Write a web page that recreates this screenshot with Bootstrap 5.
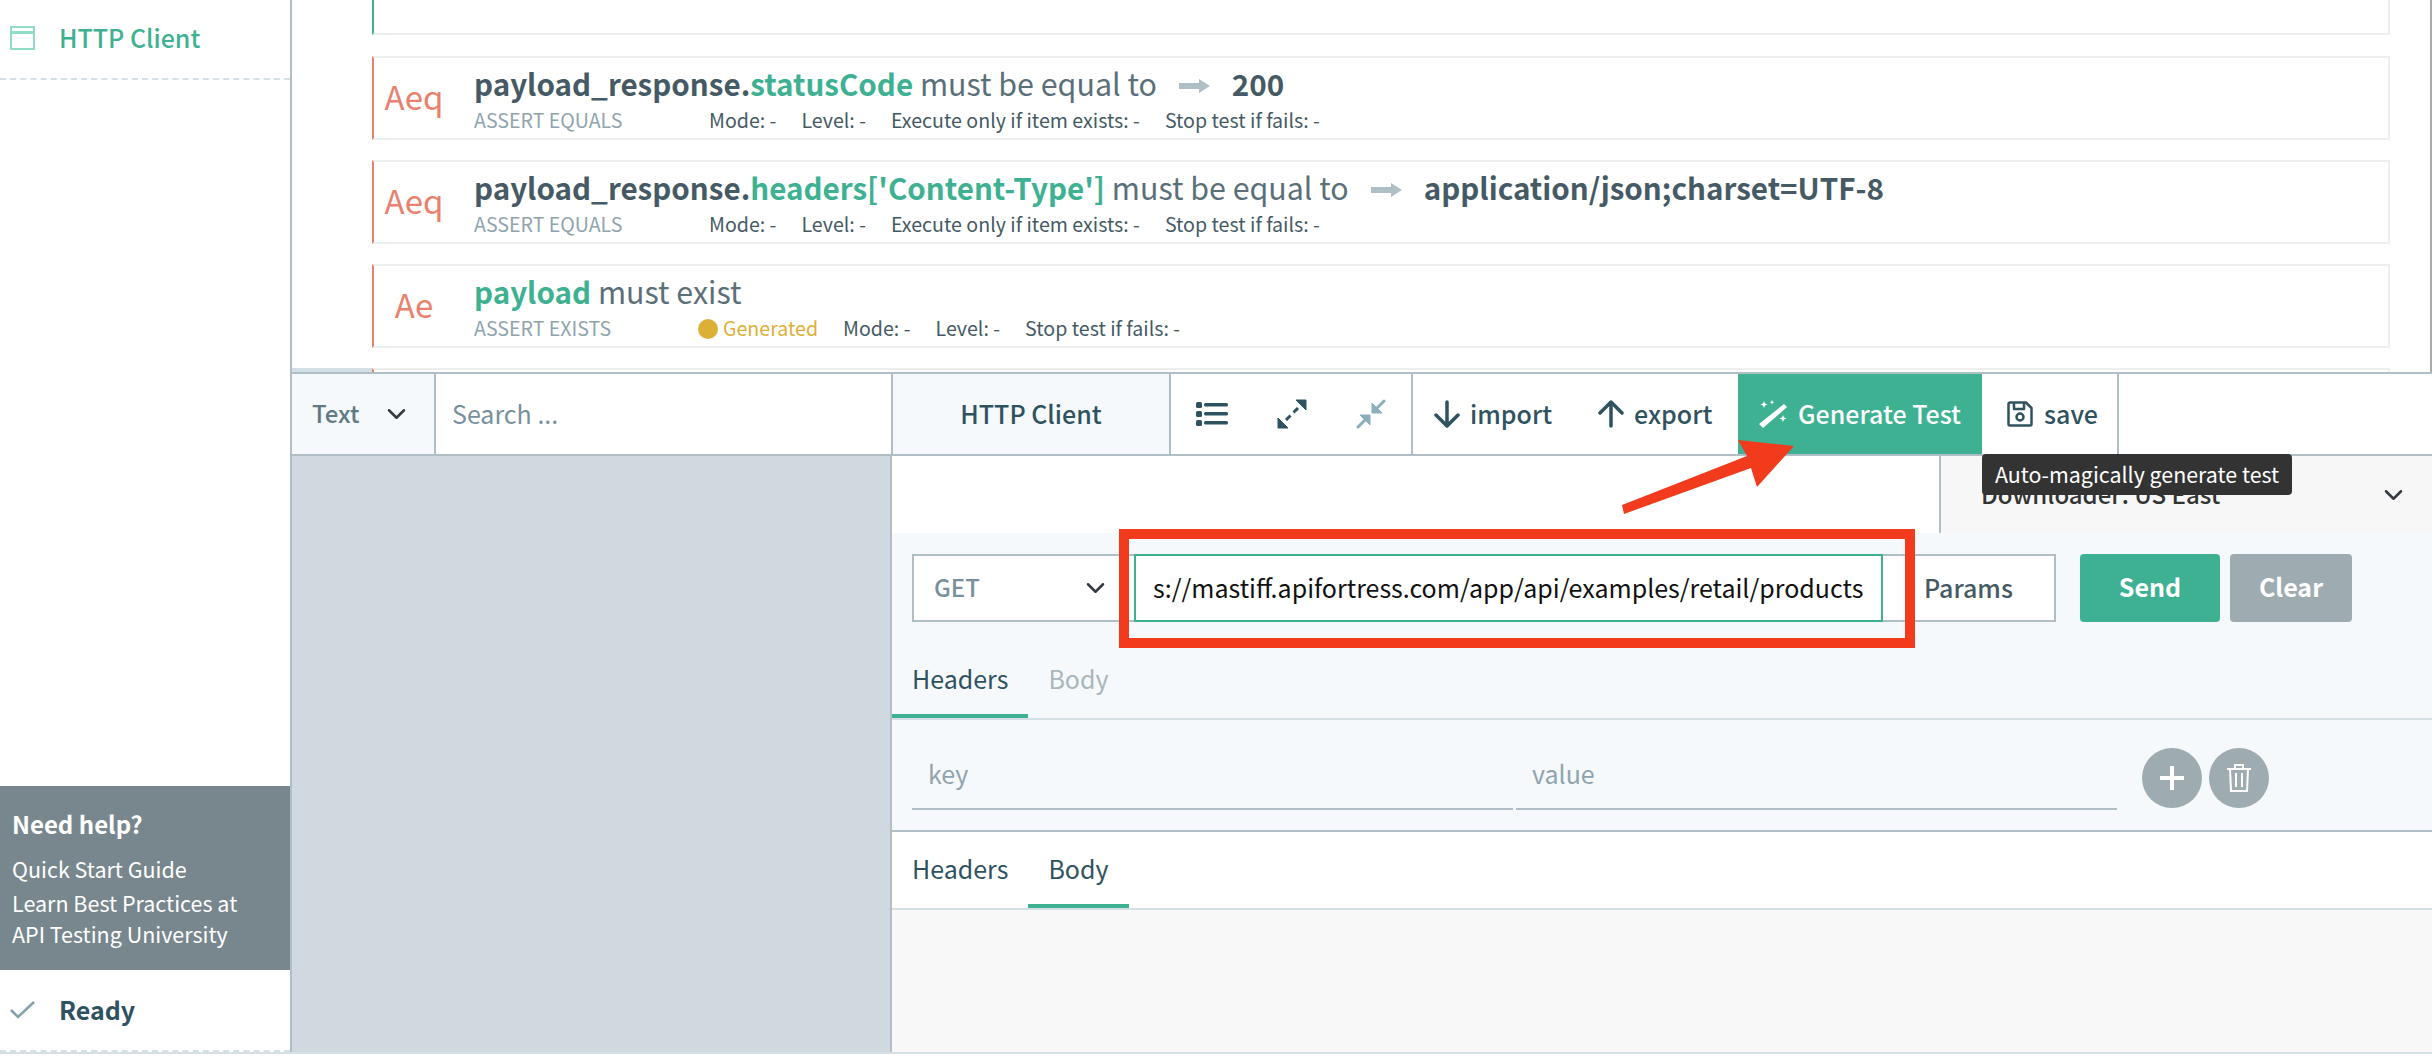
<!DOCTYPE html>
<html>
<head>
    <title>HTTP Client</title>
    <link href="https://cdn.jsdelivr.net/npm/bootstrap@5.3.0/dist/css/bootstrap.min.css" rel="stylesheet">
    <style>
        body { font-family: "Noto Sans CJK SC", "Liberation Sans", sans-serif; background: #fff; height: 1060px; overflow: hidden; color: #455a64; }
        .app { height: 1054px; border-bottom: 2px solid #d5dfe6; position: relative; }

        /* sidebar */
        .side { width: 292px; border-right: 2px solid #b0bec5; flex: none; }
        .side-item { height: 80px; padding: 0 0 2px 10px; border-bottom: 2px dashed #d5dfe6; color: #3eb193; font-size: 25px; font-weight: 500; }
        .side-item svg { margin-right: 24px; }
        .help { background: #78878e; color: #fff; padding: 20px 12px 16px; height: 184px; font-size: 21.5px; line-height: 31px; }
        .help-title { font-weight: 700; font-size: 24px; margin-bottom: 11px; line-height: 36px; }
        .help-row { margin-bottom: 3px; }
        .ready { height: 82px; padding-left: 10px; font-size: 25px; font-weight: 700; color: #2f5260; border-bottom: 2px dashed #d5dfe6; }
        .ready svg { margin-right: 24px; }

        /* assertion list */
        .assert-pane { height: 372px; overflow: hidden; border-right: 2px solid #aaa; padding-left: 80px; padding-right: 40px; }
        .assert { height: 84px; border: 2px solid #eee; border-left-color: #e8816d; margin-bottom: 20px; }
        .assert-cut { height: 35px; border-top: 0; border-left-color: #3eb193; margin-bottom: 21px; }
        .assert-peek { display: flex; margin-left: -80px; margin-right: 0; }
        .peek-fill { width: 80px; height: 4px; background: #d5dfe6; }
        .peek-box { flex: 1; height: 4px; border-top: 2px solid #eee; border-left: 2px solid #e8816d; border-right: 2px solid #eee; }
        .kind { width: 80px; margin-right: 20px; padding-bottom: 3px; text-align: center; color: #e8816d; font-size: 33px; flex: none; }
        .title-line { height: 38px; line-height: 38px; margin-top: 6px; font-size: 30.4px; color: #5b6f79; white-space: nowrap; }
        .title-line b { color: #455a64; font-weight: 700; font-size: 29.6px; }
        .title-line i { color: #3eb193; font-style: normal; font-weight: 700; font-size: 29.6px; }
        .goes-to { margin: 0 22px; vertical-align: 3px; }
        .meta-line { height: 24px; line-height: 24px; margin-top: 6px; font-size: 19.6px; color: #455a64; white-space: nowrap; }
        .meta-kind { color: #90a4ae; display: inline-block; width: 235px; }
        .meta-kind.short { width: 224px; }
        .meta-line span + span { margin-right: 25px; }
        .gen { color: #dcaf36; }
        .gen-dot { display: inline-block; width: 20px; height: 20px; border-radius: 50%; background: #dcaf36; vertical-align: -3px; margin-right: 5px; }

        /* toolbar */
        .bar { height: 84px; border-top: 2px solid #b0bec5; border-bottom: 2px solid #b0bec5; }
        .bar > div, .bar > select, .bar > input { height: 100%; }
        .sel-kind { width: 144px; flex: none; border: 0; border-right: 2px solid #b0bec5; border-radius: 0; background-color: #f5f9fc; color: #5f7a85; font-weight: 500; font-size: 24px; padding: 0 0 3px 20px; background-position: right 24px center; background-size: 27px 20px; }
        .search { width: 455px; flex: none; border: 0; border-radius: 0; font-size: 25px; padding: 0 0 2px 16px; color: #78909c; }
        .search::placeholder { color: #78909c; }
        .bar-title { width: 280px; flex: none; background: #f5f9fc; border-left: 2px solid #b0bec5; border-right: 2px solid #b0bec5; color: #2f5260; font-size: 25px; font-weight: 500; }
        .bar-icons { width: 242px; flex: none; border-right: 2px solid #b0bec5; padding-left: 25px; gap: 49px; }
        .bar-icons svg { flex: none; }
        .bar-move { width: 325px; flex: none; padding-left: 21px; color: #2f5260; font-size: 25px; font-weight: 500; }
        .bar-move svg { margin-right: 10px; flex: none; }
        .bar-move span { margin-right: 46px; }
        .bar-move span:last-child { margin-right: 0; }
        .bar-gen { width: 244px; flex: none; background: #3eb193; color: #fff; font-size: 25px; font-weight: 500; padding-left: 20px; }
        .bar-gen svg { margin-right: 10px; flex: none; }
        .bar-save { width: 137px; flex: none; border-right: 2px solid #b0bec5; color: #2f5260; font-size: 25px; font-weight: 500; padding-left: 25px; }
        .bar-save svg { margin-right: 11px; flex: none; }

        /* lower panes */
        .lower { height: 596px; }
        .tree-pane { width: 600px; flex: none; background: #d1d9e0; border-right: 2px solid #b0bec5; }
        .client { flex: 1; min-width: 0; }
        .top-strip { height: 77px; }
        .strip-blank { width: 1047px; flex: none; }
        .downloader { flex: 1; border: 0; border-left: 2px solid #b0bec5; border-radius: 0; background-color: #f7f7f7; font-size: 24px; font-weight: 500; color: #333; padding: 0 0 2px 40px; height: 77px; background-position: right 25px center; background-size: 27px 20px; }
        .req { background: #f5f9fc; height: 299px; border-bottom: 2px solid #b0bec5; }
        .req-row { height: 115px; padding: 21px 0 0 20px; }
        .method { width: 222px; height: 68px; flex: none; border: 2px solid #b0bec5; border-right: 0; border-radius: 0; color: #78909c; font-weight: 500; font-size: 24px; padding: 0 0 2px 20px; background-position: right 25px center; background-size: 27px 20px; }
        .url { width: 749px; height: 68px; flex: none; border: 2px solid #3eb193; border-radius: 0; color: #111; font-size: 25px; padding: 0 0 2px 17px; }
        .params { width: 173px; height: 68px; flex: none; background: #fff; border: 2px solid #b0bec5; border-left: 0; color: #455a64; font-weight: 500; font-size: 25px; padding-left: 41px; }
        .go { height: 68px; width: 140px; flex: none; margin-left: 24px; padding-bottom: 8px; background: #3eb193; border: 0; border-radius: 4px; color: #fff; font-weight: 700; font-size: 25px; }
        .wipe { height: 68px; width: 122px; flex: none; margin-left: 10px; padding-bottom: 8px; background: #9eacb2; border: 0; border-radius: 4px; color: #fff; font-weight: 700; font-size: 25px; opacity: 1; }
        .tab-row { display: flex; border-bottom: 2px solid #d5dfe6; background: transparent; }
        .tab-row a { display: block; height: 70px; line-height: 60px; padding: 0 20px; font-size: 25px; color: #2f5260; text-decoration: none; border-bottom: 4px solid transparent; }
        .tab-row a.on { border-bottom-color: #3eb193; }
        .tab-row a.off { color: #a9b7bd; }
        .kv { height: 110px; padding: 28px 0 0 20px; }
        .kv input { width: 601px; height: 62px; flex: none; margin-right: 3px; border: 0; border-bottom: 2px solid #b0bec5; border-radius: 0; background: transparent; font-size: 25px; padding: 0 0 10px 16px; }
        .kv input::placeholder { color: #90a4ae; }
        .round { width: 60px; height: 60px; flex: none; border-radius: 50%; background: #9eacb2; border: 0; padding: 0; margin-left: 22px; }
        .round + .round { margin-left: 7px; }
        .resp-tabs { background: #fff; }
        .resp-tabs a { height: 76px; line-height: 72px; }
        .resp-body { background: #f8f8f8; height: 142px; }

        /* overlays */
        .tip-box { position: absolute; left: 1982px; top: 454px; width: 310px; height: 41px; background: #333; color: #fff; border-radius: 4px; font-size: 21.4px; line-height: 40px; text-align: center; white-space: nowrap; }
        .mark-box { position: absolute; left: 1119px; top: 529px; width: 796px; height: 119px; border: 10px solid #f23b1d; pointer-events: none; }
        .mark-arrow { position: absolute; left: 1600px; top: 420px; }
    </style>
</head>
<body>
    <div class="app d-flex">
        <div class="side d-flex flex-column">
            <div class="side-item d-flex align-items-center">
                <svg width="25" height="24" viewBox="0 0 25 24" fill="none" stroke="#8fdcc8" stroke-width="2"><rect x="1" y="1" width="23" height="22"/><path d="M1 6.5h23" stroke-width="3"/></svg>
                HTTP Client
            </div>
            <div class="flex-grow-1"></div>
            <div class="help">
                <div class="help-title">Need help?</div>
                <div class="help-row">Quick Start Guide</div>
                <div>Learn Best Practices at</div>
                <div>API Testing University</div>
            </div>
            <div class="ready d-flex align-items-center">
                <svg width="25" height="18" viewBox="0 0 25 18" fill="none" stroke="#84a0ab" stroke-width="2.5"><path d="M1 9l7 7L24 1"/></svg>
                Ready
            </div>
        </div>

        <div class="flex-grow-1" style="min-width:0">
            <div class="assert-pane">
                <div class="assert assert-cut"></div>
                <div class="assert d-flex align-items-center">
                    <div class="kind">Aeq</div>
                    <div class="flex-grow-1 align-self-start">
                        <div class="title-line"><b>payload_response.</b><i>statusCode</i> must be equal to<svg class="goes-to" width="31" height="14" viewBox="0 0 31 14" fill="#b0bec5"><path d="M0 4h20V0l11 7-11 7v-4H0z"/></svg><b>200</b></div>
                        <div class="meta-line"><span class="meta-kind">ASSERT EQUALS</span><span>Mode: -</span><span>Level: -</span><span>Execute only if item exists: -</span><span>Stop test if fails: -</span></div>
                    </div>
                </div>
                <div class="assert d-flex align-items-center">
                    <div class="kind">Aeq</div>
                    <div class="flex-grow-1 align-self-start">
                        <div class="title-line"><b>payload_response.</b><i>headers['Content-Type']</i> must be equal to<svg class="goes-to" width="31" height="14" viewBox="0 0 31 14" fill="#b0bec5"><path d="M0 4h20V0l11 7-11 7v-4H0z"/></svg><b>application/json;charset=UTF-8</b></div>
                        <div class="meta-line"><span class="meta-kind">ASSERT EQUALS</span><span>Mode: -</span><span>Level: -</span><span>Execute only if item exists: -</span><span>Stop test if fails: -</span></div>
                    </div>
                </div>
                <div class="assert d-flex align-items-center">
                    <div class="kind">Ae</div>
                    <div class="flex-grow-1 align-self-start">
                        <div class="title-line"><i>payload</i> must exist</div>
                        <div class="meta-line"><span class="meta-kind short">ASSERT EXISTS</span><span class="gen"><span class="gen-dot"></span>Generated</span><span>Mode: -</span><span>Level: -</span><span>Stop test if fails: -</span></div>
                    </div>
                </div>
                <div class="assert-peek"><div class="peek-fill"></div><div class="peek-box"></div></div>
            </div>

            <div class="bar d-flex">
                <select class="form-select sel-kind"><option>Text</option></select>
                <input class="form-control search" type="text" placeholder="Search ...">
                <div class="bar-title d-flex align-items-center justify-content-center">HTTP Client</div>
                <div class="bar-icons d-flex align-items-center">
                    <svg width="32" height="26" viewBox="0 0 32 26" fill="#2f5260"><rect x="0" y="1" width="6" height="6" rx="1.500"/><rect x="0" y="10" width="6" height="6" rx="1.500"/><rect x="0" y="19" width="6" height="6" rx="1.500"/><rect x="8" y="2" width="24" height="3.500" rx="1.500"/><rect x="8" y="11" width="24" height="3.500" rx="1.500"/><rect x="8" y="20" width="24" height="3.500" rx="1.500"/></svg>
                    <svg width="30" height="30" viewBox="0 0 30 30" fill="#2f5260" stroke="#2f5260" stroke-width="3"><path d="M19 1h10v10z" stroke-width="1" stroke-linejoin="round"/><path d="M1 19v10h10z" stroke-width="1" stroke-linejoin="round"/><path d="M21 9l-4.500 4.500M13.500 16.500L9 21"/></svg>
                    <svg width="30" height="30" viewBox="0 0 30 30" fill="#8aaebb" stroke="#8aaebb" stroke-width="3"><path d="M16 14V4l10 10z" stroke-width="1" stroke-linejoin="round"/><path d="M14 16v10L4 16z" stroke-width="1" stroke-linejoin="round"/><path d="M21 9l7-7M9 21l-7 7" stroke-linecap="round"/></svg>
                </div>
                <div class="bar-move d-flex align-items-center">
                    <svg width="26" height="28" viewBox="0 0 26 28" fill="none" stroke="#2f5260" stroke-width="3.500" stroke-linecap="round" stroke-linejoin="round"><path d="M13 2v23M2 15l11 11 11-11"/></svg>
                    <span>import</span>
                    <svg width="26" height="28" viewBox="0 0 26 28" fill="none" stroke="#2f5260" stroke-width="3.500" stroke-linecap="round" stroke-linejoin="round"><path d="M13 26V3M2 13L13 2l11 11"/></svg>
                    <span>export</span>
                </div>
                <div class="bar-gen d-flex align-items-center">
                    <svg width="30" height="30" viewBox="0 0 30 30" fill="#fff"><path d="M26 5l3 3L5 29l-4-4zM6 2l1 2.500L9.500 5.500 7 6.500 6 9 5 6.500 2.500 5.500 5 4.500zM14 1l.7 1.500 1.500.7-1.500.7L14 5.500l-.7-1.600-1.500-.7 1.500-.7zM25 16l1 2.500 2.500 1-2.500 1-1 2.500-1-2.500-2.500-1 2.500-1z"/></svg>
                    Generate Test
                </div>
                <div class="bar-save d-flex align-items-center">
                    <svg width="26" height="26" viewBox="0 0 26 26" fill="none" stroke="#2f5260" stroke-width="2.500" stroke-linejoin="round"><path d="M3 1.500h16L24.500 7v16a1.500 1.500 0 0 1-1.500 1.500H3A1.500 1.500 0 0 1 1.500 23V3A1.500 1.500 0 0 1 3 1.500z"/><path d="M7 2v6h10V2"/><circle cx="13" cy="16" r="3.500"/></svg>
                    save
                </div>
            </div>

            <div class="lower d-flex">
                <div class="tree-pane"></div>
                <div class="client">
                    <div class="top-strip d-flex">
                        <div class="strip-blank"></div>
                        <select class="form-select downloader"><option>Downloader: US East</option></select>
                    </div>
                    <div class="req">
                        <div class="req-row d-flex">
                            <select class="form-select method"><option>GET</option></select>
                            <input class="form-control url" type="text" value="s://mastiff.apifortress.com/app/api/examples/retail/products">
                            <div class="params d-flex align-items-center">Params</div>
                            <button class="btn go" type="button">Send</button>
                            <button class="btn wipe" type="button">Clear</button>
                        </div>
                        <div class="tab-row">
                            <a class="on" href="#">Headers</a>
                            <a class="off" href="#">Body</a>
                        </div>
                        <div class="kv d-flex">
                            <input class="form-control" type="text" placeholder="key">
                            <input class="form-control" type="text" placeholder="value">
                            <button class="round d-flex align-items-center justify-content-center" type="button"><svg width="26" height="26" viewBox="0 0 26 26" fill="#fff"><path d="M11 1h4v10h10v4H15v10h-4V15H1v-4h10z"/></svg></button>
                            <button class="round d-flex align-items-center justify-content-center" type="button"><svg width="26" height="30" viewBox="0 0 26 30" fill="none" stroke="#fff" stroke-width="2"><path d="M1 6h24M9 6V2h8v4M4 6l1 22h16l1-22M10 10v14M16 10v14"/></svg></button>
                        </div>
                    </div>
                    <div class="tab-row resp-tabs">
                        <a href="#">Headers</a>
                        <a class="on" href="#">Body</a>
                    </div>
                    <div class="resp-body"></div>
                </div>
            </div>
        </div>

        <div class="tip-box">Auto-magically generate test</div>
        <div class="mark-box"></div>
        <svg class="mark-arrow" width="210" height="100" viewBox="0 0 210 100" fill="#f23b1d"><path d="M22 85L147 36 138 20 194 26 157 67 151 48 24 94z"/></svg>
    </div>
    <script src="https://cdn.jsdelivr.net/npm/bootstrap@5.3.0/dist/js/bootstrap.bundle.min.js"></script>
</body>
</html>
